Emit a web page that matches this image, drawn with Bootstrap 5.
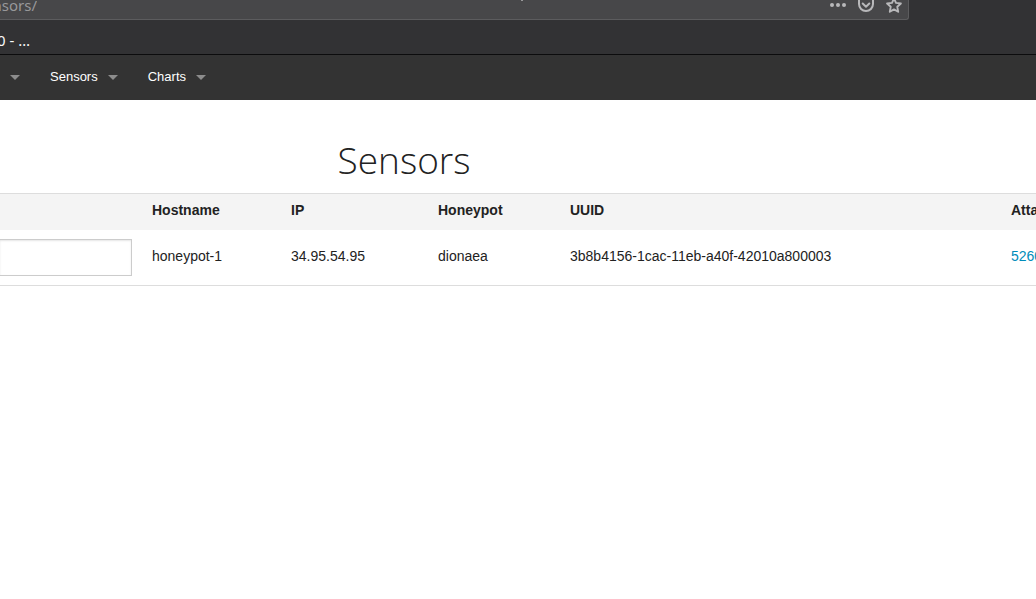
<!DOCTYPE html>
<html lang="en">
<head>
<meta charset="utf-8">
<meta name="viewport" content="width=device-width, initial-scale=1">
<title>Sensors</title>
<link href="https://cdn.jsdelivr.net/npm/bootstrap@5.3.0/dist/css/bootstrap.min.css" rel="stylesheet">
<style>
body { font-family: "Liberation Sans", Arial, sans-serif; font-size: 14px; color: #222; background: #fff; overflow-x: hidden; }
.browser-top { background: #323234; border-bottom: 1px solid #0c0c0d; font-family: "Noto Sans", sans-serif; }
.address { width: 909px; max-width: 100%; height: 20px; background: #474749; border: solid #5c5c5e; border-width: 0 1px 1px 0; border-bottom-right-radius: 3px; }
.address-text { width: 37px; height: 19px; color: #98989a; font-size: 15px; line-height: 11px; }
.address-tools { color: #b8b8ba; gap: 12px; padding-right: 6px; }
.address-tools button { width: 16px; height: 16px; margin-top: -3px; line-height: 0; color: inherit; }
.speck { width: 2px; height: 1px; background: #98989a; top: 0; left: 521px; }
.bookmarks { height: 34px; padding-top: 10px; }
.bookmark { width: 30px; height: 20px; color: #f9f9fa; font-size: 15px; line-height: 20px; }
.topbar { height: 45px; background: #333; font-size: 13px; padding: 0 0 2px 10px; gap: 30px; }
.topbar a { color: #fff; gap: 10px; line-height: 43px; }
.topbar a::after { content: ""; border: 5px solid transparent; border-top-color: #8c8c8c; border-bottom: 0; margin-top: 2px; }
.title-wrap { width: 78%; padding-top: 34px; }
.page-title { font-family: "Open Sans", sans-serif; font-weight: 300; font-size: 37px; line-height: 52px; margin-bottom: 7px; color: #222; }
.sensor-table { table-layout: fixed; width: 100%; border: solid #ddd; border-width: 1px 0; font-size: 14px; line-height: 18px; }
.sensor-table th, .sensor-table td { padding: 0 0 0 10px; white-space: nowrap; overflow: hidden; }
.sensor-table thead { background: #f4f4f4; }
.sensor-table th { height: 36px; padding-bottom: 3px; }
.sensor-table td { height: 56px; padding-bottom: 3px; }
.sensor-table td.name-cell { padding: 0 10px 0 0; }
.name-input { height: 37px; border: 1px solid #ccc; border-left: 0; border-radius: 0; box-shadow: inset 0 1px 2px rgba(0,0,0,.1); }
.sensor-table a { color: #008cba; }
.c-name { width: 142px; } .c-host { width: 139px; } .c-ip { width: 147px; } .c-pot { width: 132px; } .c-att { width: 35px; }
</style>
</head>
<body>
<header class="browser-top">
  <div class="address position-relative d-flex justify-content-between">
    <div class="address-text d-flex justify-content-end overflow-hidden"><span>nsors/</span></div>
    <span class="speck position-absolute"></span>
    <div class="address-tools d-flex">
      <button class="btn p-0 border-0" type="button" aria-label="Page actions"><svg width="16" height="16" viewBox="0 0 16 16" fill="currentColor"><circle cx="2" cy="8" r="2"/><circle cx="8" cy="8" r="2"/><circle cx="14" cy="8" r="2"/></svg></button>
      <button class="btn p-0 border-0" type="button" aria-label="Save"><svg width="16" height="16" viewBox="0 0 16 16" fill="none" stroke="currentColor" stroke-width="2" stroke-linecap="round" stroke-linejoin="round"><path d="M2 1h12a1 1 0 0 1 1 1v5a7 7 0 0 1-14 0V2a1 1 0 0 1 1-1z"/><path d="M4.700 6.500 8 9.700l3.300-3.200"/></svg></button>
      <button class="btn p-0 border-0" type="button" aria-label="Bookmark"><svg width="16" height="16" viewBox="0 0 16 16" fill="none" stroke="currentColor" stroke-width="1.900" stroke-linejoin="round"><path d="m8 1.500 2 4.400 4.900.6-3.600 3.300.9 5L8 12.400l-4.200 2.400.9-5L1.100 6.500 6 5.900z"/></svg></button>
    </div>
  </div>
  <div class="bookmarks">
    <div class="bookmark d-flex justify-content-end overflow-hidden text-nowrap"><span>0 - …</span></div>
  </div>
</header>
<nav class="topbar d-flex">
  <a href="#" class="d-flex align-items-center text-decoration-none" aria-label="Menu"></a>
  <a href="#" class="d-flex align-items-center text-decoration-none">Sensors</a>
  <a href="#" class="d-flex align-items-center text-decoration-none">Charts</a>
</nav>
<main>
  <div class="title-wrap text-center"><h1 class="page-title">Sensors</h1></div>
  <table class="sensor-table">
    <colgroup><col class="c-name"><col class="c-host"><col class="c-ip"><col class="c-pot"><col><col class="c-att"></colgroup>
    <thead><tr><th></th><th>Hostname</th><th>IP</th><th>Honeypot</th><th>UUID</th><th>Atta</th></tr></thead>
    <tbody><tr>
      <td class="name-cell"><input class="name-input form-control" type="text" aria-label="Name"></td>
      <td>honeypot-1</td><td>34.95.54.95</td><td>dionaea</td><td>3b8b4156-1cac-11eb-a40f-42010a800003</td>
      <td><a href="#" class="text-decoration-none">5260</a></td>
    </tr></tbody>
  </table>
</main>
<script src="https://cdn.jsdelivr.net/npm/bootstrap@5.3.0/dist/js/bootstrap.bundle.min.js"></script>
</body>
</html>
